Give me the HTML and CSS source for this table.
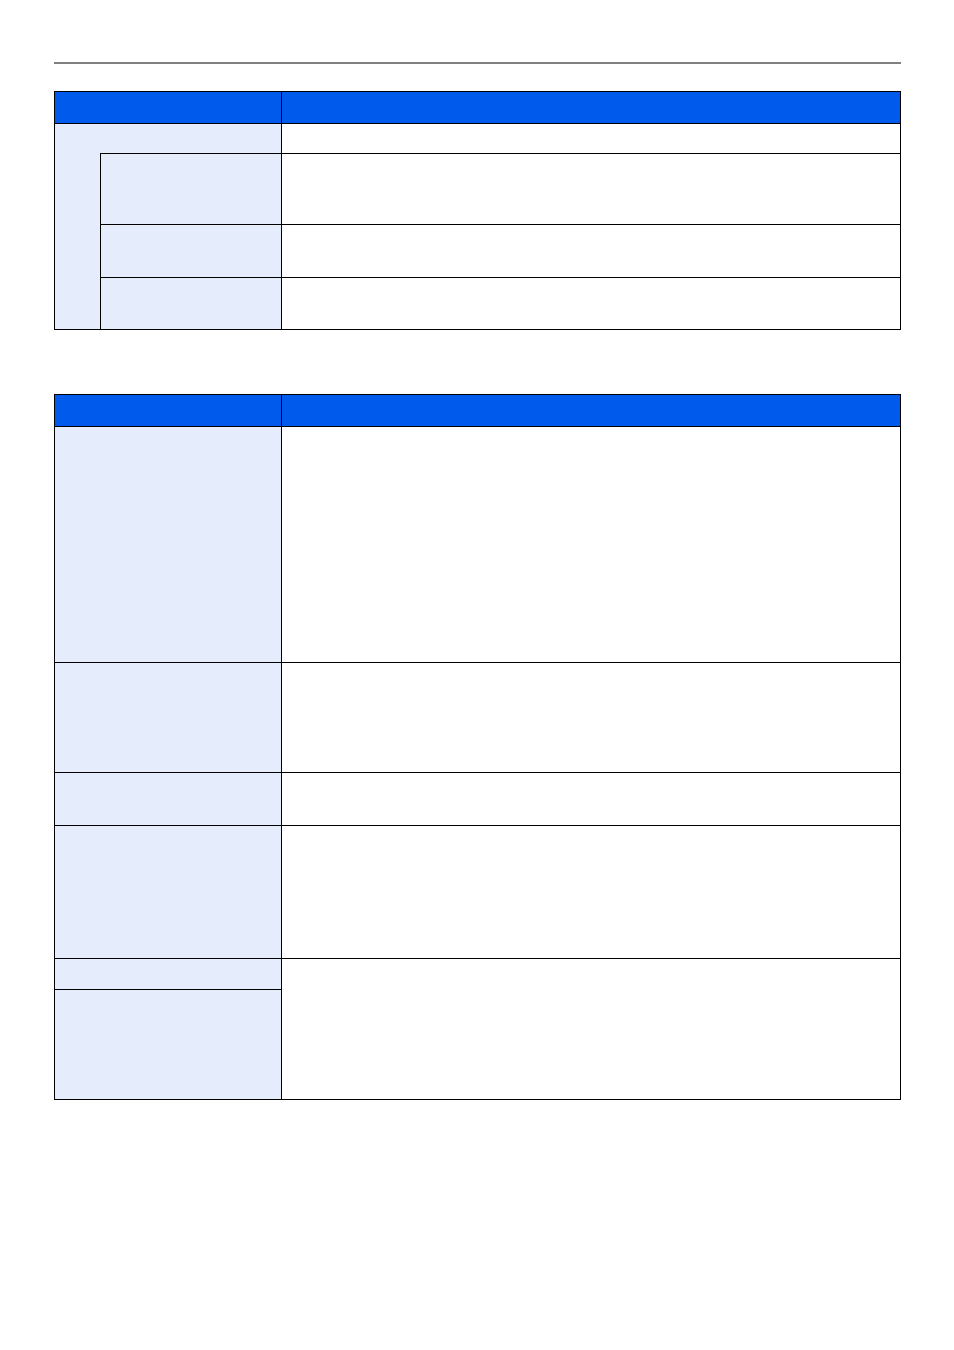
FILE: index.html
```html
<!DOCTYPE html>
<html>
<head>
<meta charset="utf-8">
<link rel="stylesheet" href="styles.css">
</head>
<body>
<div class="page">
  <div class="rule"></div>

  <div class="grid grid-one">
    <div class="cell head span-ab"></div>
    <div class="cell head"></div>

    <div class="cell label col-a"></div>
    <div class="cell label b-first"></div>
    <div class="cell value r1"></div>

    <div class="cell label sub r2b"></div>
    <div class="cell value r2"></div>

    <div class="cell label sub r3b"></div>
    <div class="cell value r3"></div>

    <div class="cell label sub r4b"></div>
    <div class="cell value r4"></div>
  </div>

  <div class="grid grid-two">
    <div class="cell head"></div>
    <div class="cell head"></div>

    <div class="cell label"></div>
    <div class="cell value"></div>

    <div class="cell label"></div>
    <div class="cell value"></div>

    <div class="cell label"></div>
    <div class="cell value"></div>

    <div class="cell label"></div>
    <div class="cell value"></div>

    <div class="cell label"></div>
    <div class="cell value span-rows"></div>

    <div class="cell label"></div>
  </div>
</div>
</body>
</html>
```
FILE: styles.css
```css
html, body {
  margin: 0;
  padding: 0;
  background: #ffffff;
  font-family: "Liberation Sans", Arial, sans-serif;
}

.page {
  width: 847px;
  margin-left: 54px;
  padding-top: 62px;
}

.rule {
  height: 2px;
  background: #808080;
}

.grid {
  display: grid;
  border-left: 1px solid #000;
  border-top: 1px solid #000;
  box-sizing: border-box;
}

.grid-one {
  margin-top: 27px;
  grid-template-columns: 45px 182px 619px;
  grid-template-rows: 32px 30px 71px 53px 52px;
}

.grid-two {
  margin-top: 64px;
  grid-template-columns: 227px 619px;
  grid-template-rows: 32px 236px 110px 53px 133px 31px 110px;
}

.cell {
  box-sizing: border-box;
  border-right: 1px solid #000;
  border-bottom: 1px solid #000;
}

.head {
  background: #005aec;
}

.label {
  background: #e5ecfc;
}

.value {
  background: #ffffff;
}

.span-ab {
  grid-column: 1 / 3;
}

.col-a {
  grid-column: 1;
  grid-row: 2 / 6;
  border-right: none;
}

.b-first {
  grid-column: 2;
  grid-row: 2;
}

.sub {
  grid-column: 2;
  border-left: 1px solid #000;
}

.r1 { grid-column: 3; grid-row: 2; }
.r2b { grid-row: 3; }
.r2 { grid-column: 3; grid-row: 3; }
.r3b { grid-row: 4; }
.r3 { grid-column: 3; grid-row: 4; }
.r4b { grid-row: 5; }
.r4 { grid-column: 3; grid-row: 5; }

.span-rows {
  grid-column: 2;
  grid-row: 6 / 8;
}
```
